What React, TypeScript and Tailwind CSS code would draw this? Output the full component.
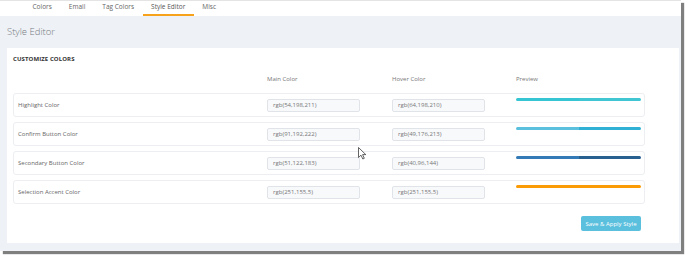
import React from "react";

const tabs = ["Colors", "Email", "Tag Colors", "Style Editor", "Misc"];

const rows = [
  { label: "Highlight Color", main: "rgb(54,198,211)", hover: "rgb(64,198,210)" },
  { label: "Confirm Button Color", main: "rgb(91,192,222)", hover: "rgb(49,176,213)" },
  { label: "Secondary Button Color", main: "rgb(51,122,183)", hover: "rgb(40,96,144)" },
  { label: "Selection Accent Color", main: "rgb(251,155,5)", hover: "rgb(251,155,5)" },
];

export default function App() {
  return (
    <div
      className="relative w-[688px] h-[258px] bg-white overflow-hidden"
      style={{ fontFamily: '"Open Sans", "Noto Sans", sans-serif' }}
    >
      <div className="flex flex-col w-[681px] h-[251px] bg-[#eef1f5] shadow-[3px_3px_1px_0_rgba(0,0,0,0.5)]">
        {/* Tabs */}
        <div className="flex h-[16px] shrink-0 bg-white pl-[24px] border-t border-[#e4e4e4]">
          {tabs.map((t) => (
            <div
              key={t}
              className={
                t === "Style Editor"
                  ? "flex items-center px-[8.5px] h-full text-[6.5px] leading-none text-[#555] border-b-2 border-[#f7a21b]"
                  : "flex items-center px-[8.5px] h-full text-[6.5px] leading-none text-[#666] border-b-2 border-transparent"
              }
            >
              {t}
            </div>
          ))}
        </div>

        {/* Title */}
        <div className="flex items-center h-[32px] shrink-0 px-[7px] text-[9.5px] font-light text-[#777c83]">
          Style Editor
        </div>

        {/* Card */}
        <div className="ml-[7px] w-[672px] h-[195px] shrink-0 bg-white px-[6px] pt-[7px] flex flex-col">
          <div className="text-[6px] leading-[8px] font-bold text-[#333] tracking-[0.1px]">
            CUSTOMIZE COLORS
          </div>

          <div className="mt-[12px] grid grid-cols-[249px_125px_124px_125px] pl-[5px] text-[6px] leading-[8px] text-[#777]">
            <div />
            <div>Main Color</div>
            <div>Hover Color</div>
            <div>Preview</div>
          </div>

          <div className="mt-[10px] flex flex-col gap-[5px] w-[632px]">
            {rows.map((r) => (
              <div
                key={r.label}
                className="grid grid-cols-[249px_125px_124px_125px] h-[24px] pl-[4px] border border-[#eceef1] rounded-[3px]"
              >
                <div className="self-center text-[6px] leading-[8px] text-[#666]">{r.label}</div>
                <div className="self-center h-[13px] w-[93px] flex items-center px-[5px] bg-[#f8f9fb] border border-[#e0e4e9] rounded-[2px] text-[6px] text-[#777]">
                  {r.main}
                </div>
                <div className="self-center h-[13px] w-[93px] flex items-center px-[5px] bg-[#f8f9fb] border border-[#e0e4e9] rounded-[2px] text-[6px] text-[#777]">
                  {r.hover}
                </div>
                <div className="self-start mt-[4px] flex h-[3px] w-[125px] rounded-full overflow-hidden">
                  <div className="flex-1" style={{ backgroundColor: r.main }} />
                  <div className="flex-1" style={{ backgroundColor: r.hover }} />
                </div>
              </div>
            ))}
          </div>

          <div className="mt-[12px] flex w-[628px] justify-end">
            <div className="flex items-center justify-center h-[15px] w-[60px] rounded-[2px] bg-[#5bc0de] text-white text-[6px] leading-none">
              Save &amp; Apply Style
            </div>
          </div>
        </div>
      </div>

      {/* mouse cursor */}
      <svg
        className="absolute left-[358px] top-[147px]"
        width="9"
        height="13"
        viewBox="0 0 9 13"
      >
        <path
          d="M0.5 0.5 L0.5 10.5 L3 8.2 L4.8 12 L6.3 11.3 L4.6 7.6 L7.8 7.6 Z"
          fill="#fff"
          stroke="#222"
          strokeWidth="0.7"
          strokeLinejoin="round"
        />
      </svg>
    </div>
  );
}
